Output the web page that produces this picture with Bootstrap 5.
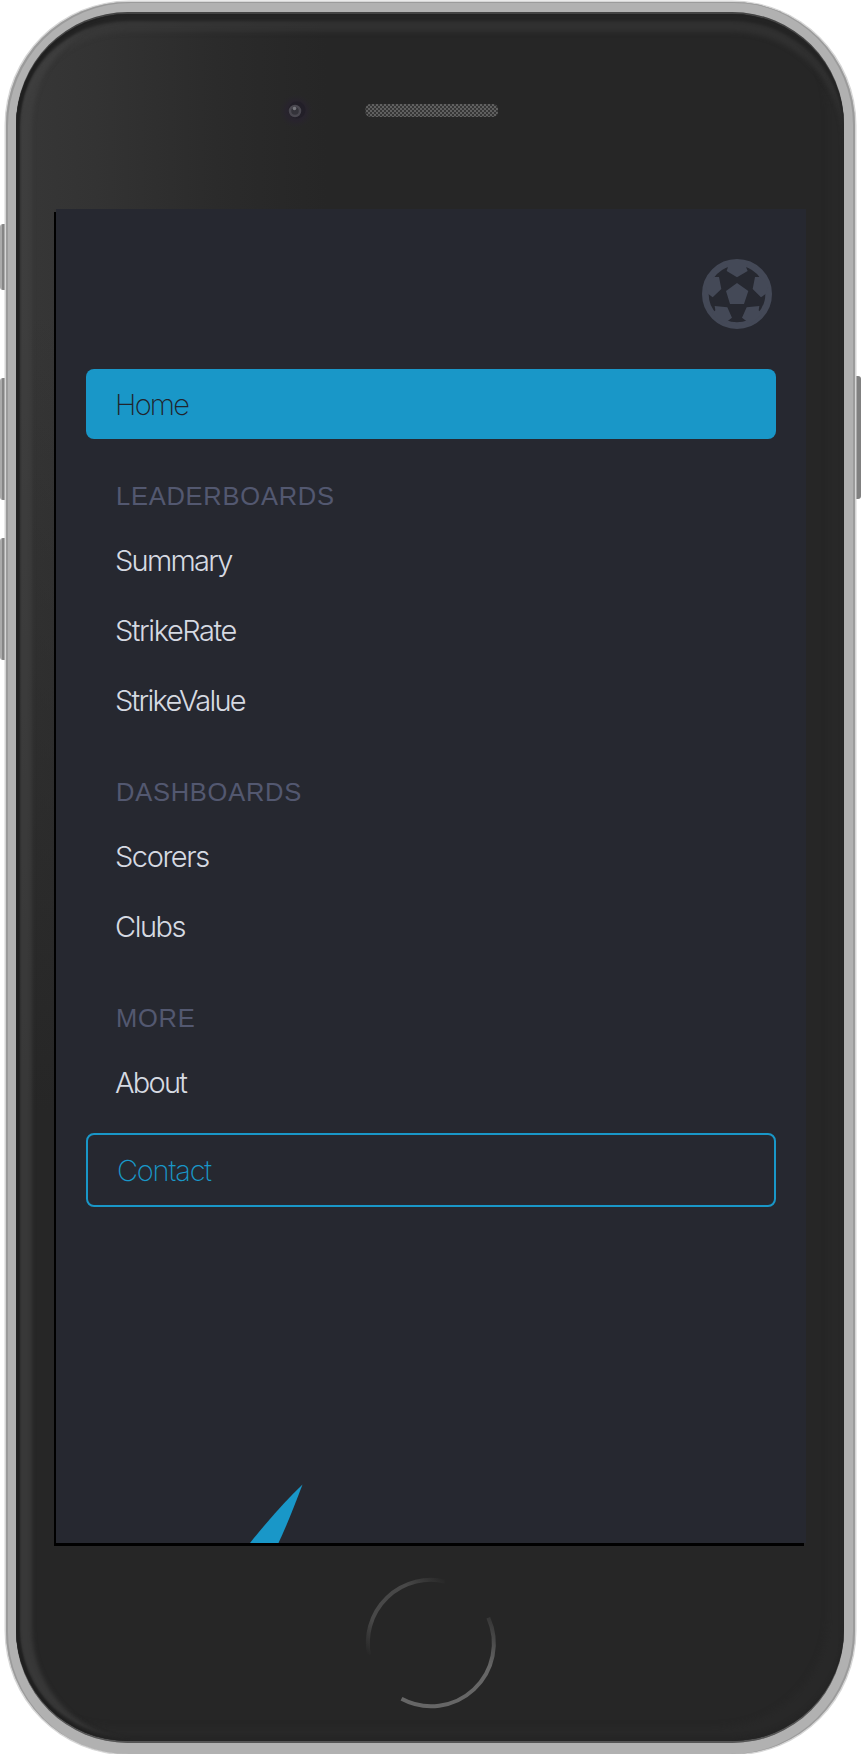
<!DOCTYPE html>
<html lang="en">
<head>
<meta charset="utf-8">
<meta name="viewport" content="width=device-width, initial-scale=1">
<title>StrikeRate menu</title>
<link rel="stylesheet" href="https://cdn.jsdelivr.net/npm/bootstrap@5.3.0/dist/css/bootstrap.min.css">
<style>
body{background:#fff;font-family:Inter,"Liberation Sans",sans-serif;overflow:hidden}
.stage{width:861px;height:1754px}
.side-key{width:7px;background:linear-gradient(90deg,#aaa 0 2px,#858585 2px)}
.key-mute{left:0;top:224px;height:66px;border-radius:3px 0 0 3px}
.key-up{left:0;top:378px;height:122px;border-radius:3px 0 0 3px}
.key-down{left:0;top:538px;height:122px;border-radius:3px 0 0 3px}
.key-power{left:854px;top:376px;height:123px;background:#808080;border-radius:0 3px 3px 0}
.phone{width:849px;height:1752px;margin:2px 6px 0;padding:10px 11px 11px 10px;border-radius:123px;background:#b1b1b1;
 box-shadow:inset 2px 1px 0 #9b9b9b,inset -2px 0 0 #9b9b9b,0 0 0 1.5px #d6d6d6}
.face{height:100%;padding:197px 38px 0;border-radius:112px;
 background:linear-gradient(180deg,rgba(38,38,38,0) 0,rgba(38,38,38,0) 300px,#262626 1100px),linear-gradient(90deg,#373737 0,#333 80px,#2b2b2b 200px,#262626 310px);
 box-shadow:inset 0 2px 0 #444,inset 0 -2px 0 #555}
.rim{inset:2px 0;border-radius:112px;box-shadow:inset 4px 0 2px #202020,inset 0 7px 3px #242424,inset 0 -5px 3px #262626,inset 17px 0 4px -1px rgba(66,66,66,.65),inset 0 18px 5px rgba(62,62,62,.45),inset -16px -14px 6px rgba(46,46,46,.4)}
.screen{width:752px;height:1337px;border-left:2px solid #000;border-bottom:3px solid #000;background:#262830;padding:50px 30px 0}
.ball{width:70px;height:70px;margin-bottom:40px}
.menu-link{height:70px;padding:1px 29px 0;line-height:70px;font-size:29px;font-weight:300;color:#d6dae2;letter-spacing:-1.75px;border-radius:8px;white-space:nowrap}
.menu-home{background:#1997c8;color:#21242c;font-weight:200}
.link-rate{letter-spacing:-1.45px}
.menu-contact{height:74px;border:2px solid #1997c8;color:#1997c8;margin-top:16px;font-weight:250;letter-spacing:-1.2px}
.menu-title{height:86px;padding:42px 30px 0;line-height:30px;font-family:"Liberation Sans",Arial,sans-serif;font-size:25.5px;letter-spacing:.75px;color:#535870;margin:0;font-weight:400}
.overlay{inset:0}
</style>
<script src="https://cdn.jsdelivr.net/npm/bootstrap@5.3.0/dist/js/bootstrap.bundle.min.js"></script>
</head>
<body>
<div class="stage position-relative overflow-hidden">
 <span class="side-key key-mute position-absolute"></span>
 <span class="side-key key-up position-absolute"></span>
 <span class="side-key key-down position-absolute"></span>
 <span class="side-key key-power position-absolute"></span>
 <div class="phone position-relative">
  <div class="face position-relative">
   <div class="rim position-absolute"></div>
   <main class="screen position-relative">
    <div class="d-flex justify-content-end pe-1">
     <svg class="ball flex-shrink-0" viewBox="0 0 210 210" fill="#444957">
      <circle cx="105" cy="105" r="95" fill="none" stroke="#444957" stroke-width="20"/>
      <path d="M105 72 139 96 126 135H84L72 96ZM74 36 105 55 137 36 132 24 140 12H70L78 24ZM159 54 152 90 177 115 192 104 200 80 174 54ZM51 54 58 90 32 115 18 104 10 80 36 54ZM170 154 172 141 134 145 120 176 132 185 145 195 180 165ZM40 154 38 141 76 145 90 176 78 185 65 195 30 165Z"/>
     </svg>
    </div>
    <nav class="nav flex-column flex-nowrap">
     <a class="menu-link menu-home text-decoration-none" href="#">Home</a>
     <h6 class="menu-title">LEADERBOARDS</h6>
     <a class="menu-link text-decoration-none" href="#">Summary</a>
     <a class="menu-link link-rate text-decoration-none" href="#">StrikeRate</a>
     <a class="menu-link text-decoration-none" href="#">StrikeValue</a>
     <h6 class="menu-title">DASHBOARDS</h6>
     <a class="menu-link link-rate text-decoration-none" href="#">Scorers</a>
     <a class="menu-link link-rate text-decoration-none" href="#">Clubs</a>
     <h6 class="menu-title">MORE</h6>
     <a class="menu-link text-decoration-none" href="#">About</a>
     <a class="menu-link menu-contact text-decoration-none" href="#">Contact</a>
    </nav>
   </main>
  </div>
 </div>
 <!-- camera, speaker, home button and the page mark at the screen's edge -->
 <svg class="overlay position-absolute pe-none" width="861" height="1754" viewBox="0 0 861 1754">
  <defs>
   <pattern id="mesh" width="4" height="4" patternUnits="userSpaceOnUse"><rect width="4" height="4" fill="#363636"/><path d="M0 0h2v2H0zM2 2h2v2H2z" fill="#606060"/></pattern>
   <linearGradient id="arcA" gradientUnits="userSpaceOnUse" x1="368" y1="1655" x2="446" y2="1580"><stop offset="0" stop-color="#262626"/><stop offset=".25" stop-color="#484848"/><stop offset=".7" stop-color="#484848"/><stop offset="1" stop-color="#262626"/></linearGradient>
   <linearGradient id="arcB" gradientUnits="userSpaceOnUse" x1="488" y1="1614" x2="430" y2="1706"><stop offset="0" stop-color="#333"/><stop offset=".4" stop-color="#666"/><stop offset="1" stop-color="#666"/></linearGradient>
   <radialGradient id="lens"><stop offset="0" stop-color="#25222b"/><stop offset=".6" stop-color="#28242d"/><stop offset="1" stop-color="#28262b" stop-opacity="0"/></radialGradient>
  </defs>
  <circle cx="296" cy="111" r="17" fill="url(#lens)"/>
  <circle cx="297" cy="110" r="8.500" fill="#221f28"/>
  <circle cx="295" cy="111" r="5" fill="#34333a" stroke="#4a4850" stroke-width="2.500"/>
  <circle cx="294.500" cy="108.500" r="1.800" fill="#77777d"/>
  <rect x="365.500" y="104" width="132.500" height="13" rx="5" fill="url(#mesh)"/>
  <path d="M369 1655A63 63 0 0 1 445 1581.500" fill="none" stroke="url(#arcA)" stroke-width="4"/>
  <path d="M488.300 1617.800A62.700 62.700 0 0 1 401.500 1698.800" fill="none" stroke="url(#arcB)" stroke-width="4"/>
  <path d="M302.500 1484.500Q278 1508 250 1543H278.500Q288 1523 302.500 1484.500Z" fill="#1997c8"/>
  <path d="M54 209h2v3h-2z" fill="#343434"/><path d="M804 1543h2v3h-2z" fill="#272727"/>
 </svg>
</div>
</body>
</html>
